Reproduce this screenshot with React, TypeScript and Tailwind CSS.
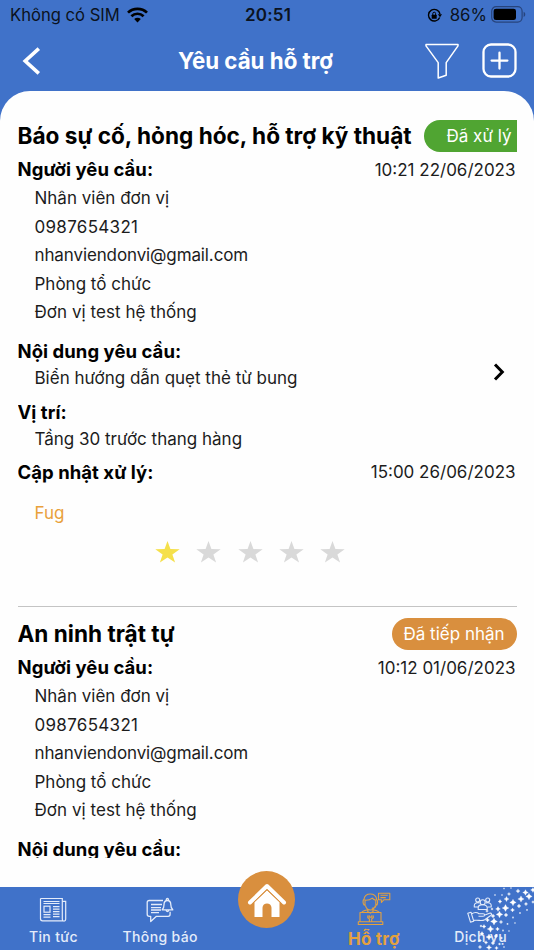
import React from 'react';

interface SupportRequest {
  title: string;
  status: string;
  statusClass: string;
  createdAt: string;
  content: string;
  location: string;
  updatedAt: string;
  note: string;
  rating: number;
}

const requester = [
  { text: 'Nhân viên đơn vị', className: '' },
  { text: '0987654321', className: 'tracking-[0.3px]' },
  { text: 'nhanviendonvi@gmail.com', className: 'tracking-[-0.12px]' },
  { text: 'Phòng tổ chức', className: '' },
  { text: 'Đơn vị test hệ thống', className: 'tracking-[0.05px]' },
];

const requests: SupportRequest[] = [
  {
    title: 'Báo sự cố, hỏng hóc, hỗ trợ kỹ thuật',
    status: 'Đã xử lý',
    statusClass: 'w-[93px] rounded-l-full bg-[#50a532] pl-[23px]',
    createdAt: '10:21 22/06/2023',
    content: 'Biển hướng dẫn quẹt thẻ từ bung',
    location: 'Tầng 30 trước thang hàng',
    updatedAt: '15:00 26/06/2023',
    note: 'Fug',
    rating: 1,
  },
  {
    title: 'An ninh trật tự',
    status: 'Đã tiếp nhận',
    statusClass: 'w-[125px] rounded-full bg-[#d98f3e] pl-[12px]',
    createdAt: '10:12 01/06/2023',
    content: '',
    location: '',
    updatedAt: '',
    note: '',
    rating: 0,
  },
];

const StatusBar: React.FC = () => (
  <div className="flex h-[30px] items-center pl-[10px] pr-[8px] pt-px text-[17px] text-[#0b1220]">
    <div className="flex flex-1 items-center gap-[7px]">
      <span className="text-[16.6px] whitespace-nowrap">Không có SIM</span>
      <svg className="h-[16px] w-[21px]" viewBox="0 0 21 16" fill="none" stroke="#000" strokeWidth="2.7">
        <path d="M1 5.6C6.2.5 14.8.5 20 5.6" />
        <path d="M4.4 9.2c3.4-3.3 8.8-3.3 12.2 0" />
        <path d="M7.2 12.1c1.9-1.7 4.7-1.7 6.6 0L10.5 15.4z" fill="#000" stroke="none" />
      </svg>
    </div>
    <span className="font-semibold tracking-[0.2px]">20:51</span>
    <div className="flex flex-1 items-center justify-end">
      <svg className="mr-[8px] h-[15px] w-[15px]" viewBox="0 0 15 15" fill="none" stroke="#000" strokeWidth="1.4">
        <path d="M12.7 9.4A5.8 5.8 0 1 1 13 6" />
        <path d="M10.8 6.2h4.2l-2 3z" fill="#000" stroke="none" />
        <rect x="4.7" y="6.7" width="5" height="4" rx=".5" fill="#000" stroke="none" />
        <path d="M5.8 7V5.6a1.4 1.4 0 0 1 2.8 0V7" strokeWidth="1" />
      </svg>
      <span className="text-[16.8px]">86%</span>
      <svg className="ml-[4px] mt-[-2px] h-[17px] w-[35px]" viewBox="0 0 35 17">
        <rect x=".7" y=".7" width="30.4" height="15.4" rx="4.5" fill="none" stroke="#27447c" strokeWidth="1.2" />
        <rect x="2.6" y="2.7" width="22.4" height="11.4" rx="2.4" fill="#000" />
        <path d="M32.6 5.8c2.2.8 2.2 4.4 0 5.2z" fill="#27447c" />
      </svg>
    </div>
  </div>
);

const Header: React.FC = () => (
  <div className="flex h-[61px] items-center justify-between pl-[22px] pr-[17px] text-white">
    <svg className="h-[28px] w-[19px]" viewBox="0 0 19 28" fill="none" stroke="currentColor" strokeWidth="3.6">
      <path d="M16.8 1.6 3.2 14l13.6 12.4" />
    </svg>
    <h1 className="pl-[45px] text-[22.3px] font-bold whitespace-nowrap">Yêu cầu hỗ trợ</h1>
    <div className="flex items-center gap-[23px]">
      <svg className="h-[36px] w-[34px]" viewBox="0 0 34 36" fill="none" stroke="currentColor" strokeWidth="1.5" strokeLinejoin="round">
        <path d="M1 1.5h32v1.4L21.2 19.6v12.6L13.2 35V19.6L1 2.9z" />
      </svg>
      <svg className="h-[35px] w-[35px]" viewBox="0 0 35 35" fill="none" stroke="currentColor" strokeWidth="2.3" strokeLinecap="round">
        <rect x="1.5" y="1.5" width="32" height="32" rx="7.5" />
        <path d="M17.5 9.7v15.8M9.6 17.6h15.8" />
      </svg>
    </div>
  </div>
);

const labelClass = 'text-[18.5px] font-bold tracking-[0.05px] text-black whitespace-nowrap';
const valueClass = 'pl-[17px] text-[17px] whitespace-nowrap';

const Rating: React.FC<{ value: number }> = ({ value }) => (
  <div className="mt-[13px] flex h-6 items-center justify-center gap-[16.2px] pr-[34px]">
    {[1, 2, 3, 4, 5].map(n => (
      <svg key={n} className="h-6 w-[25px]" viewBox="0 0 25 24" fill={n <= value ? '#f5e04b' : '#d9d9d9'}>
        <path d="M12.5 1l2.9 8.1 9.3.1-7.3 5.2 2.7 8.1-7.6-4.9-7.6 4.9 2.7-8.1L.3 9.2l9.3-.1z" />
      </svg>
    ))}
  </div>
);

const RequestCard: React.FC<{ item: SupportRequest }> = ({ item }) => (
  <article className="mb-[11px] h-[487px] border-b border-[#c4c4c4] text-[#1c1c1c]">
    <div className="flex h-8 items-center justify-between">
      <h2 className="text-[22.6px] font-bold text-black whitespace-nowrap">{item.title}</h2>
      <span className={`flex h-8 shrink-0 items-center pt-[2px] text-[17px] text-white whitespace-nowrap ${item.statusClass}`}>
        {item.status}
      </span>
    </div>
    <div className="mt-1 flex h-7 items-center justify-between pr-px">
      <span className={labelClass}>Người yêu cầu:</span>
      <span className="pt-px text-[17px]">{item.createdAt}</span>
    </div>
    <div>
      {requester.map(line => (
        <p key={line.text} className={`h-[28.5px] leading-[28.5px] ${valueClass} ${line.className}`}>{line.text}</p>
      ))}
    </div>
    <div className="mt-[10.5px] flex items-center justify-between">
      <div>
        <p className={`h-7 leading-7 ${labelClass}`}>Nội dung yêu cầu:</p>
        <p className={`h-[26px] leading-[26px] ${valueClass}`}>{item.content}</p>
      </div>
      <svg className="mr-[12px] mt-[16px] h-[18px] w-[12px]" viewBox="0 0 12 18" fill="none" stroke="#000" strokeWidth="3">
        <path d="M2 1.5 9.3 9 2 16.5" />
      </svg>
    </div>
    <p className={`mt-[6.5px] h-7 leading-7 ${labelClass}`}>Vị trí:</p>
    <p className={`h-[26px] leading-[26px] ${valueClass}`}>{item.location}</p>
    <div className="mt-[7.5px] flex h-7 items-center justify-between pr-px">
      <span className={labelClass}>Cập nhật xử lý:</span>
      <span className="text-[17px]">{item.updatedAt}</span>
    </div>
    <p className={`mt-[11.5px] h-7 leading-7 text-[#e9a13b] ${valueClass}`}>{item.note}</p>
    <Rating value={item.rating} />
  </article>
);

const NewsIcon: React.FC = () => (
  <svg className="h-[26px] w-[28px]" viewBox="0 0 28 26" fill="none" stroke="currentColor" strokeWidth="1.2">
    <path d="M1.5 1.5h21.8v20.8c0 2.4 3.4 2.4 3.4 0V4.3h-3M1.5 1.5v20.3c0 1.2.7 2 2 2h21" />
    <path d="M4.5 4.5h16M4.5 6.5h16M14 9.7h6.5M14 12.2h6.5M14 14.7h6.5M14 17.2h6.5M14 19.7h6.5M4.5 17.7h7M4.5 20.2h7" />
    <rect x="5" y="9.2" width="6" height="6" />
  </svg>
);

const NotificationIcon: React.FC = () => (
  <svg className="h-[26px] w-[28px]" viewBox="0 0 28 26" fill="none" stroke="currentColor" strokeWidth="1.3" strokeLinejoin="round">
    <path d="M17 3.5H3.2c-1.2 0-2 .8-2 2v11.8c0 1.2.8 2 2 2h1.5v5.3l5.7-5.3h11.7c1.2 0 2-.8 2-2v-2.5" />
    <path d="M5 7.5h11M5 10.6h10M5 13h10M5 15.6h8" />
    <path d="M16.2 12.8c1.5-1.2 1.8-2.5 1.8-5 0-2.8 1.2-4.3 3.4-4.3s3.4 1.5 3.4 4.3c0 2.5.5 3.8 2 5zM20.3 3.3c-.3-2.4 2.5-2.4 2.2 0M20 13c.3 2 2.6 2 2.9 0" />
  </svg>
);

const SupportIcon: React.FC = () => (
  <svg className="h-[34px] w-[34px]" viewBox="0 0 34 34" fill="none" stroke="currentColor" strokeWidth="1.1" strokeLinejoin="round">
    <path d="M7.5 13.5C5.8 12 5.5 8.3 7 7.3 7.5 3.5 10 2 13.3 2c3.5 0 5.8 1.7 6.4 5.3 1.4 1.2 1.2 5-.4 6.2M8 7.5v6M18.8 7.5v6M8 8.3c3.8.2 6-1 7.3-2.2 1 1.2 2.2 1.9 3.5 2.2" />
    <path d="M8.4 13.3c1 3.7 3 4.7 5 4.7s4-1 5-4.7M18.8 13.5c0 2-2 2.7-4 2.7M10.8 17.5v2.2l2.6 1.4 2.6-1.4v-2.2M10.5 17.8c-3.8.8-5.3 1-6 3M16.3 17.8c3.8.8 5.3 1 6 3" />
    <path d="M21.5 1.2h11.3v6.6h-6l-2.4 2.7V7.8h-2.9zM23.5 3.3h7.3M23.5 5.6h5.3" />
    <path d="M3 20.5h21v9.3h1.8v2.7H1.3v-2.7H3zM3 29.8h21M10.8 23.5v2.2l1.6 1.2v2.5M16.3 23.5v2.2l-1.6 1.2v2.5M12.2 23.2v1.9h2.6v-1.9" />
  </svg>
);

const ServiceIcon: React.FC = () => (
  <svg className="h-[26px] w-[27px]" viewBox="0 0 27 26" fill="none" stroke="currentColor" strokeWidth="1.1" strokeLinejoin="round">
    <circle cx="10.7" cy="3" r="2" />
    <circle cx="20.7" cy="3" r="2" />
    <circle cx="15.7" cy="5.3" r="2.5" />
    <path d="M11.2 12.5v-1.7c0-4.3 9-4.3 9 0v1.7zM10.8 10H7.3V8.2c0-2 2.8-3.3 5.4-2.2M20.6 10h3.6V8.2c0-2-2.8-3.3-5.4-2.2" />
    <path d="M.8 16.3 4 15.2l2.7 9-3.2.9zM4.5 17c3.2-2.2 5-2.3 7.5-.3h4c2.4 0 2.4 2.5 0 2.5h-4.5M17.3 18.3l5.2-2c2-.7 2.8 1 1.2 2.2l-6 4.2c-3 1.8-6 0-11.2.7" />
  </svg>
);

// x, y, half size of each sparkle in the corner of the tab bar
const sparkles = [
  [70, 1.5, 0.8], [77, 1, 0.7], [84, 4, 2.1], [91.5, 5.5, 2.8], [99, 3, 2.4], [75, 7, 1.6], [68, 8, 0.8], [61, 8, 0.8],
  [66, 14.5, 1.9], [72.5, 12, 2.5], [79, 15.5, 3.2], [87, 12, 3.1], [95, 9.5, 3.2], [99, 15, 1.4],
  [58, 22, 1.2], [64, 22, 2.4], [71.5, 21, 3.4], [78.5, 23, 2], [85, 19, 2], [92, 17, 1.7],
  [53, 24, 1.4], [59, 29, 2], [65.5, 27.5, 3.3], [72, 28, 2], [79, 30.5, 1], [86, 26, 1], [93, 23, 0.9],
  [47, 39, 1.2], [53.5, 33, 2], [60, 34.5, 3.4], [67, 35, 1.8], [73.5, 37, 0.9], [81, 36, 0.7],
  [50, 39.5, 2], [56.5, 42, 3.3], [63.5, 42, 1.9], [69, 43.5, 1], [75, 44, 0.7],
  [48, 46.5, 1.9], [55, 50, 3], [62, 49, 2], [67.5, 51, 1.2], [46, 53.5, 1.5], [52, 55.5, 1.8],
  [59, 56, 2], [65.5, 57, 1.2], [46, 60, 1.8], [55, 60.5, 2.6], [62.5, 61, 1.8], [70, 60, 0.8],
];

const Sparkles: React.FC = () => (
  <svg className="pointer-events-none absolute right-0 bottom-0 h-[63px] w-[100px] overflow-hidden" viewBox="0 0 100 63" fill="#fff">
    {sparkles.map(([x, y, r], i) => (
      <path
        key={i}
        d={`M${x} ${y - r}Q${x + r * 0.18} ${y - r * 0.18} ${x + r} ${y}Q${x + r * 0.18} ${y + r * 0.18} ${x} ${y + r}Q${x - r * 0.18} ${y + r * 0.18} ${x - r} ${y}Q${x - r * 0.18} ${y - r * 0.18} ${x} ${y - r}Z`}
        stroke="#fff"
        strokeWidth=".3"
      />
    ))}
  </svg>
);

const tabClass = 'flex flex-1 flex-col items-center whitespace-nowrap';
const tabLabelClass = 'mt-[4px] text-[14px] leading-5 font-medium tracking-[0.35px]';

const TabBar: React.FC = () => (
  <nav className="relative flex h-[63px] shrink-0 bg-[#4072c9] text-[#e4ecfa]">
    <div className={`${tabClass} pt-[10px]`}>
      <NewsIcon />
      <span className={tabLabelClass}>Tin tức</span>
    </div>
    <div className={`${tabClass} pt-[10px]`}>
      <NotificationIcon />
      <span className={tabLabelClass}>Thông báo</span>
    </div>
    <div className={tabClass}>
      <div className="-mt-[16px] flex h-[57px] w-[57px] items-center justify-center rounded-full bg-[#d98f3e]">
        <svg className="h-[36px] w-[40px]" viewBox="0 0 40 36">
          <path d="M3 20.5 20 4l17 16.5" fill="none" stroke="#fff" strokeWidth="4" strokeLinecap="round" strokeLinejoin="round" />
          <path d="M7.5 20.3 20 8.3l12.5 12V35h-8v-9.2c0-5.8-9-5.8-9 0V35h-8z" fill="#fff" />
          <path d="M5.5 21.5 20 7.7l14.5 13.8" fill="none" stroke="#d98f3e" strokeWidth="1" />
        </svg>
      </div>
    </div>
    <div className={`${tabClass} pt-[5px] text-[#e3a13f]`}>
      <SupportIcon />
      <span className="mt-[3px] text-[17px] leading-5 font-bold tracking-[0.2px]">Hỗ trợ</span>
    </div>
    <div className={`${tabClass} pt-[10px]`}>
      <ServiceIcon />
      <span className={tabLabelClass}>Dịch vụ</span>
    </div>
    <Sparkles />
  </nav>
);

const App: React.FC = () => (
  <div className="flex h-[950px] w-[534px] flex-col overflow-hidden bg-[#4072c9] font-['Inter','Noto_Sans',sans-serif]">
    <StatusBar />
    <Header />
    <main className="min-h-0 flex-1 rounded-t-[30px] bg-[#fefefe] px-[17.5px] pt-[29px]">
      <div className="h-[738px] overflow-hidden">
        {requests.map(item => (
          <RequestCard key={item.title} item={item} />
        ))}
      </div>
    </main>
    <TabBar />
  </div>
);

export default App;
